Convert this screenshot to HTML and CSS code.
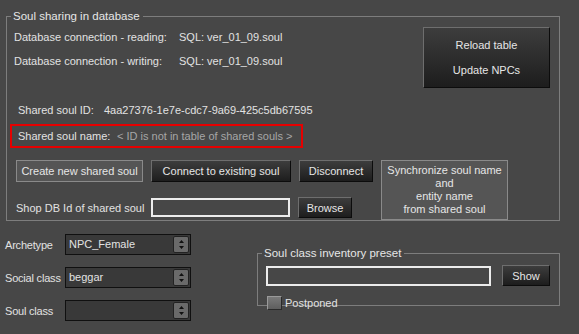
FILE: index.html
```html
<!DOCTYPE html>
<html>
<head>
<meta charset="utf-8">
<link rel="stylesheet" href="styles.css">
</head>
<body>
<div class="page">
  <fieldset class="group main-group">
    <legend>Soul sharing in database</legend>
    <div class="top">
      <div class="conn">
        <div class="kv"><span class="k">Database connection - reading:</span><span class="v">SQL: ver_01_09.soul</span></div>
        <div class="kv"><span class="k">Database connection - writing:</span><span class="v">SQL: ver_01_09.soul</span></div>
      </div>
      <button class="btn dark reload"><span>Reload table</span><span>Update NPCs</span></button>
    </div>
    <div class="id-row"><span class="id-k">Shared soul ID:</span><span>4aa27376-1e7e-cdc7-9a69-425c5db67595</span></div>
    <div class="name-row"><span class="name-k">Shared soul name:</span><span class="muted">&lt; ID is not in table of shared souls &gt;</span></div>
    <div class="mid">
      <div class="mid-left">
        <div class="btn-row">
          <button class="btn light b-create">Create new shared soul</button>
          <button class="btn dark b-connect">Connect to existing soul</button>
          <button class="btn dark b-disc">Disconnect</button>
        </div>
        <div class="shop-row">
          <span class="shop-k">Shop DB Id of shared soul</span>
          <span class="input shop-in"></span>
          <button class="btn dark b-browse">Browse</button>
        </div>
      </div>
      <button class="btn light b-sync">Synchronize soul name<br>and<br>entity name<br>from shared soul</button>
    </div>
  </fieldset>
  <div class="bottom">
    <div class="combos">
      <div class="crow"><span class="ck">Archetype</span><span class="combo"><span class="cv">NPC_Female</span><span class="arrow"><svg width="7" height="11" viewBox="0 0 7 11"><path d="M3.5 1 L6 4 H1 Z M1 7 H6 L3.5 10 Z" fill="#111"/></svg></span></span></div>
      <div class="crow"><span class="ck">Social class</span><span class="combo"><span class="cv">beggar</span><span class="arrow"><svg width="7" height="11" viewBox="0 0 7 11"><path d="M3.5 1 L6 4 H1 Z M1 7 H6 L3.5 10 Z" fill="#111"/></svg></span></span></div>
      <div class="crow"><span class="ck">Soul class</span><span class="combo"><span class="cv"></span><span class="arrow"><svg width="7" height="11" viewBox="0 0 7 11"><path d="M3.5 1 L6 4 H1 Z M1 7 H6 L3.5 10 Z" fill="#111"/></svg></span></span></div>
    </div>
    <fieldset class="group preset">
      <legend>Soul class inventory preset</legend>
      <div class="preset-row">
        <span class="input preset-in"></span>
        <button class="btn dark b-show">Show</button>
      </div>
      <label class="check"><span class="box"></span><span>Postponed</span></label>
    </fieldset>
  </div>
</div>
</body>
</html>
```
FILE: styles.css
```css
html, body {
  margin: 0;
  padding: 0;
  background: #474747;
  width: 579px;
  height: 334px;
  overflow: hidden;
}
body {
  font-family: "Liberation Sans", Arial, sans-serif;
  font-size: 11px;
  color: #e2e2e2;
  white-space: nowrap;
}
.page {
  padding: 10px 0 0 6px;
}
.group {
  border: 1px solid #7d7d7d;
  margin: 0;
  padding: 0;
  min-width: 0;
}
.group legend {
  padding: 0 3px 0 2px;
  margin-left: 4px;
  line-height: 13px;
  font-size: 11.5px;
  color: #e6e6e6;
}
.main-group {
  width: 552px;
  height: 209px;
  box-sizing: content-box;
}
.top {
  display: flex;
  justify-content: space-between;
  align-items: flex-start;
}
.conn {
  padding: 2px 0 0 7px;
}
.kv {
  height: 24px;
  display: flex;
  align-items: center;
}
.k {
  width: 165px;
}
.btn {
  font-family: inherit;
  font-size: 11px;
  color: #e6e6e6;
  padding: 0;
  margin: 0;
  box-sizing: border-box;
  display: flex;
  align-items: center;
  justify-content: center;
  white-space: nowrap;
}
.btn.dark {
  background: linear-gradient(#3d3d3d, #1d1d1d);
  border: 1px solid;
  border-color: #6e6e6e #0c0c0c #0c0c0c #6e6e6e;
}
.btn.light {
  background: #555555;
  border: 1px solid #8a8a8a;
}
.reload {
  width: 127px;
  height: 61px;
  margin: 4px 9px 0 0;
  flex-direction: column;
  gap: 13px;
}
.id-row {
  display: flex;
  align-items: center;
  height: 20px;
  margin-top: 12px;
  padding-left: 11px;
}
.id-k {
  width: 86px;
}
.name-row {
  display: flex;
  align-items: center;
  box-sizing: border-box;
  width: 293px;
  height: 24px;
  margin: 4px 0 0 3px;
  padding-left: 6px;
  border: 2px solid #e60000;
}
.name-k {
  width: 99px;
}
.muted {
  color: #a6a6a6;
}
.mid {
  display: flex;
  align-items: flex-start;
  margin-top: 12px;
  padding-left: 9px;
  gap: 8px;
}
.btn-row {
  display: flex;
  gap: 8px;
}
.btn-row .btn {
  height: 22px;
}
.b-create { width: 127px; }
.b-connect { width: 140px; }
.b-disc { width: 74px; }
.shop-row {
  display: flex;
  align-items: center;
  margin-top: 15px;
}
.shop-k {
  width: 135px;
}
.input {
  display: block;
  box-sizing: border-box;
  border: 2px solid #ececec;
  background: #474747;
}
.shop-in {
  width: 139px;
  height: 19px;
}
.b-browse {
  width: 54px;
  height: 21px;
  margin-left: 8px;
}
.b-sync {
  width: 127px;
  height: 60px;
  line-height: 13px;
  flex-direction: column;
  text-align: center;
}
.bottom {
  display: flex;
  align-items: flex-start;
}
.combos {
  padding-top: 13px;
  width: 251px;
}
.crow {
  display: flex;
  align-items: center;
  height: 21px;
  margin-bottom: 12px;
}
.ck {
  width: 60px;
  margin-left: -1px;
  letter-spacing: -0.2px;
}
.combo {
  display: flex;
  box-sizing: border-box;
  width: 126px;
  height: 21px;
  border: 1px solid #101010;
  background: #393939;
}
.cv {
  flex: 1;
  padding-left: 3px;
  line-height: 19px;
}
.arrow {
  width: 16px;
  margin: 1px;
  box-sizing: border-box;
  background: #6a6a6a;
  border: 1px solid #222;
  border-radius: 2px;
  display: flex;
  align-items: center;
  justify-content: center;
}
.preset {
  margin-top: 26px;
  width: 301px;
  height: 57px;
  box-sizing: content-box;
}
.preset-row {
  display: flex;
  align-items: center;
  padding: 5px 0 0 8px;
  gap: 11px;
}
.preset-in {
  width: 225px;
  height: 20px;
}
.b-show {
  width: 48px;
  height: 21px;
}
.check {
  display: flex;
  align-items: center;
  gap: 3px;
  margin: 10px 0 0 9px;
  line-height: 14px;
}
.box {
  display: block;
  box-sizing: border-box;
  width: 15px;
  height: 14px;
  border: 1px solid;
  border-color: #9a9a9a #2a2a2a #2a2a2a #9a9a9a;
  background: linear-gradient(#7a7a7a, #5e5e5e);
}
```
